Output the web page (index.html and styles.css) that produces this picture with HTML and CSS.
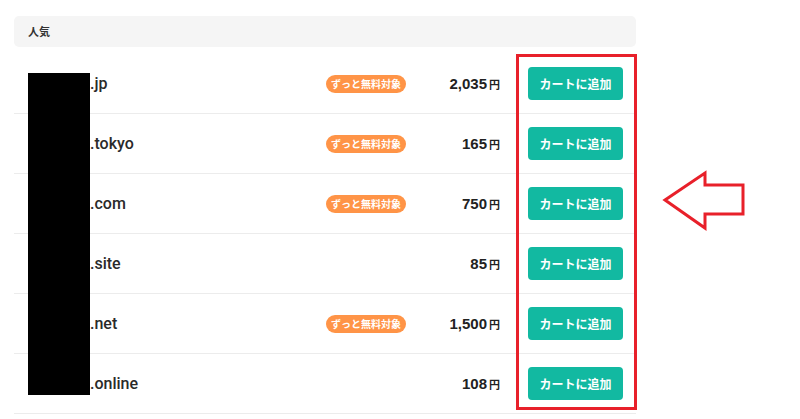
FILE: index.html
```html
<!DOCTYPE html>
<html lang="ja">
<head>
  <meta charset="UTF-8" />
  <meta name="viewport" content="width=device-width, initial-scale=1.0"/>
  <title>人気ドメイン</title>
  <link rel="stylesheet" href="styles.css">
</head>
<body>

  <div class="page">
    <div class="ranking">
      <div class="ranking-title">人気</div>

      <div class="ranking-list">
        <div class="row">
          <div class="domain">.jp</div>
          <div><span class="badge">ずっと無料対象</span></div>
          <div class="price">2,035<small>円</small></div>
          <div class="action"><button class="cart-btn">カートに追加</button></div>
        </div>
        <div class="row">
          <div class="domain">.tokyo</div>
          <div><span class="badge">ずっと無料対象</span></div>
          <div class="price">165<small>円</small></div>
          <div class="action"><button class="cart-btn">カートに追加</button></div>
        </div>
        <div class="row">
          <div class="domain">.com</div>
          <div><span class="badge">ずっと無料対象</span></div>
          <div class="price">750<small>円</small></div>
          <div class="action"><button class="cart-btn">カートに追加</button></div>
        </div>
        <div class="row">
          <div class="domain">.site</div>
          <div></div>
          <div class="price">85<small>円</small></div>
          <div class="action"><button class="cart-btn">カートに追加</button></div>
        </div>
        <div class="row">
          <div class="domain">.net</div>
          <div><span class="badge">ずっと無料対象</span></div>
          <div class="price">1,500<small>円</small></div>
          <div class="action"><button class="cart-btn">カートに追加</button></div>
        </div>
        <div class="row">
          <div class="domain">.online</div>
          <div></div>
          <div class="price">108<small>円</small></div>
          <div class="action"><button class="cart-btn">カートに追加</button></div>
        </div>

        <!-- masquage + annotations -->
        <div class="redacted"></div>
        <div class="highlight"></div>
      </div>
    </div>

    <svg class="arrow" width="90" height="66" viewBox="0 0 90 66">
      <polygon points="5,32 45,5 45,17 83,17 83,46 45,46 45,60" fill="#fff" stroke="#e8202a" stroke-width="3" stroke-linejoin="miter"/>
    </svg>
  </div>

</body>
</html>
```

FILE: styles.css
```css
body, html {
  margin: 0;
  padding: 0;
  background: #fff;
  font-family: "Liberation Sans", "Noto Sans CJK JP", sans-serif;
  color: #333;
}

.page {
  position: relative;
  width: 800px;
  height: 419px;
  overflow: hidden;
}

.ranking {
  width: 622px;
  margin: 16px 0 0 14px;
}

.ranking-title {
  height: 31px;
  line-height: 31px;
  background: #f5f5f5;
  border-radius: 5px;
  padding-left: 14px;
  font-family: "Noto Sans CJK JP", sans-serif;
  font-size: 11px;
  font-weight: bold;
  color: #333;
}

.ranking-list {
  position: relative;
  margin-top: 7px;
}

.row {
  display: grid;
  grid-template-columns: 1fr 80px 94px 136px;
  align-items: center;
  height: 59px;
  border-bottom: 1px solid #ececec;
}

.domain {
  padding-left: 76px;
  font-family: Roboto, "Liberation Sans", sans-serif;
  font-size: 16px;
  font-weight: 500;
  color: #2a2a2a;
}

.badge {
  display: inline-block;
  width: 80px;
  height: 18px;
  line-height: 18px;
  border-radius: 9px;
  background: #ff9447;
  color: #fff;
  text-align: center;
  font-family: "Noto Sans CJK JP", sans-serif;
  font-size: 10px;
  font-weight: bold;
}

.price {
  text-align: right;
  font-size: 15px;
  font-weight: bold;
  color: #222;
}

.price small {
  margin-left: 2px;
  font-family: "Noto Sans CJK JP", sans-serif;
  font-size: 11px;
}

.action {
  display: flex;
  justify-content: flex-end;
  padding-right: 13px;
}

.cart-btn {
  width: 95px;
  height: 33px;
  border: none;
  border-radius: 4px;
  background: #12b9a1;
  color: #fff;
  font-family: "Noto Sans CJK JP", sans-serif;
  font-size: 12px;
  font-weight: bold;
  padding: 0;
}

.redacted {
  position: absolute;
  left: 14px;
  top: 19px;
  width: 62px;
  height: 322px;
  background: #000;
}

.highlight {
  position: absolute;
  left: 502px;
  top: 0;
  width: 115px;
  height: 350px;
  border: 3px solid #e8202a;
}

.arrow {
  position: absolute;
  left: 660px;
  top: 168px;
}
```
